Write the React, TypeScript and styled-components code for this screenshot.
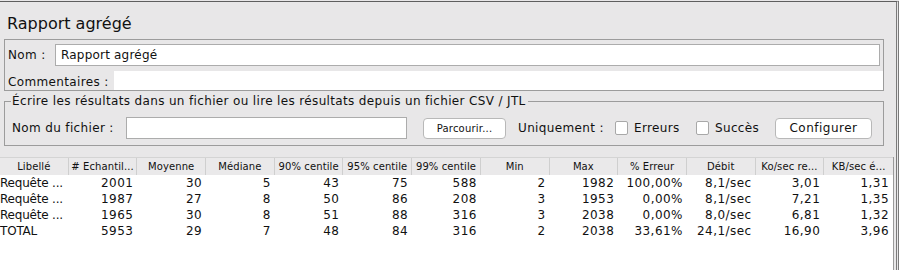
import React from 'react'
import styled, { createGlobalStyle } from 'styled-components'

const font = `"DejaVu Sans", "Liberation Sans", sans-serif`
const panel_bg = '#e8e7e8'
const panel_border = '#9c9c9c'
const field_border = '#acacac'

const GlobalStyle = createGlobalStyle`
  html, body {
    margin: 0;
    padding: 0;
    background: ${panel_bg};
  }
  body {
    font-family: ${font};
    color: #111;
  }
`

const Page = styled.div`
  width: 899px;
  height: 270px;
  box-sizing: border-box;
  margin-top: 1px;
  border-top: 1px solid #5f5f5f;
  border-right: 3px double #7a7a7a;
  display: flex;
  flex-direction: column;
  overflow: hidden;
`

const Title = styled.h1`
  margin: 12px 0 0 7px;
  font-size: 16px;
  font-weight: normal;
  line-height: 20px;
  height: 25px;
`

const Panel = styled.div`
  margin-left: 4px;
  width: 880px;
  box-sizing: border-box;
  border: 1px solid ${panel_border};
  display: flex;
  flex-direction: column;
`

const Row = styled.div<{ $height: number; $top?: number }>`
  display: flex;
  align-items: center;
  height: ${p => p.$height}px;
  margin-top: ${p => p.$top || 0}px;
  font-size: 12px;
  letter-spacing: 0.35px;
`

const Label = styled.span<{ $pad: number; $width?: number }>`
  padding-left: ${p => p.$pad}px;
  width: ${p => (p.$width ? `${p.$width}px` : 'auto')};
  flex-shrink: 0;
  white-space: nowrap;
`

const CommentLabel = styled(Label)`
  align-self: flex-end;
  padding-bottom: 1px;
`

const TextField = styled.div<{ $width?: number }>`
  box-sizing: border-box;
  height: 22px;
  width: ${p => (p.$width ? `${p.$width}px` : 'auto')};
  flex: ${p => (p.$width ? 'none' : 1)};
  margin-right: ${p => (p.$width ? 0 : 3)}px;
  background: #fff;
  border: 1px solid ${field_border};
  padding-left: 5px;
  display: flex;
  align-items: center;
  font-size: 12px;
  letter-spacing: 0.2px;
`

const CommentArea = styled.div`
  flex: 1;
  align-self: stretch;
  margin-top: 2px;
  background: #fff;
`

const Fieldset = styled.fieldset`
  margin: 3px 0 0 4px;
  width: 880px;
  box-sizing: border-box;
  border: 1px solid ${panel_border};
  padding: 0;
  height: 52px;
`

const Legend = styled.legend`
  margin-left: 6px;
  padding: 0 2px 0 1px;
  font-size: 12px;
  line-height: 14px;
  letter-spacing: 0.35px;
`

const Button = styled.div<{ $width: number; $small?: boolean }>`
  box-sizing: border-box;
  width: ${p => p.$width}px;
  height: 21px;
  background: #fff;
  border: 1px solid #b8b8b8;
  border-radius: 4px;
  display: flex;
  align-items: center;
  justify-content: center;
  font-size: ${p => (p.$small ? 10 : 12)}px;
  letter-spacing: ${p => (p.$small ? 0.2 : 0.5)}px;
  flex-shrink: 0;
`

const Checkbox = styled.span`
  box-sizing: border-box;
  width: 13px;
  height: 14px;
  background: #fff;
  border: 1px solid #a8a8a8;
  border-radius: 2px;
  margin-right: 6px;
  flex-shrink: 0;
`

const Gap = styled.span<{ $w: number }>`
  width: ${p => p.$w}px;
  flex-shrink: 0;
`

const Table = styled.div`
  margin-top: 11px;
  width: 893px;
  flex: 1;
  background: #fff;
  border-right: 1px solid #9a9a9a;
`

const Grid = styled.div<{ $header?: boolean }>`
  display: grid;
  grid-template-columns: repeat(13, 1fr);
  height: ${p => (p.$header ? 17 : 16)}px;
  background: ${p => (p.$header ? '#eae9ea' : '#fff')};
  border-top: ${p => (p.$header ? `1px solid #d4d4d4` : 'none')};
  font-size: ${p => (p.$header ? 10 : 12)}px;
  letter-spacing: ${p => (p.$header ? '0.1px' : '0.45px')};
`

const HeadCell = styled.div`
  display: flex;
  align-items: center;
  justify-content: center;
  border-right: 1px solid #cfcfcf;
  white-space: nowrap;
  overflow: hidden;
  &:last-child {
    border-right: none;
  }
`

const Cell = styled.div<{ $left?: boolean }>`
  display: flex;
  align-items: center;
  justify-content: ${p => (p.$left ? 'flex-start' : 'flex-end')};
  padding-right: ${p => (p.$left ? 0 : 4)}px;
  letter-spacing: ${p => (p.$left ? '-0.2px' : 'inherit')};
  white-space: nowrap;
  overflow: hidden;
`

const headers = [
  'Libellé', '# Echantil...', 'Moyenne', 'Médiane', '90% centile', '95% centile',
  '99% centile', 'Min', 'Max', '% Erreur', 'Débit', 'Ko/sec re...', 'KB/sec é...'
]

const rows = [
  ['Requête ...', '2001', '30', '5', '43', '75', '588', '2', '1982', '100,00%', '8,1/sec', '3,01', '1,31'],
  ['Requête ...', '1987', '27', '8', '50', '86', '208', '3', '1953', '0,00%', '8,1/sec', '7,21', '1,35'],
  ['Requête ...', '1965', '30', '8', '51', '88', '316', '3', '2038', '0,00%', '8,0/sec', '6,81', '1,32'],
  ['TOTAL', '5953', '29', '7', '48', '84', '316', '2', '2038', '33,61%', '24,1/sec', '16,90', '3,96']
]

const App = () => {
  return (
    <Page>
      <GlobalStyle />
      <Title>Rapport agrégé</Title>
      <Panel>
        <Row $height={29}>
          <Label $pad={3} $width={47}>Nom :</Label>
          <TextField>Rapport agrégé</TextField>
        </Row>
        <Row $height={21}>
          <CommentLabel $pad={3} $width={106}>Commentaires :</CommentLabel>
          <CommentArea />
        </Row>
      </Panel>
      <Fieldset>
        <Legend>Écrire les résultats dans un fichier ou lire les résultats depuis un fichier CSV / JTL</Legend>
        <Row $height={30} $top={5}>
          <Label $pad={7} $width={114}>Nom du fichier :</Label>
          <TextField $width={281}>{''}</TextField>
          <Gap $w={16} />
          <Button $width={83} $small>Parcourir...</Button>
          <Gap $w={12} />
          <Label $pad={0} $width={97}>Uniquement :</Label>
          <Checkbox />
          <Label $pad={0} $width={62}>Erreurs</Label>
          <Checkbox />
          <Label $pad={0} $width={60}>Succès</Label>
          <Button $width={97}>Configurer</Button>
        </Row>
      </Fieldset>
      <Table>
        <Grid $header>
          {headers.map(h => (
            <HeadCell key={h}>{h}</HeadCell>
          ))}
        </Grid>
        {rows.map((r, i) => (
          <Grid key={i}>
            {r.map((v, j) => (
              <Cell key={j} $left={j === 0}>{v}</Cell>
            ))}
          </Grid>
        ))}
      </Table>
    </Page>
  )
}

export default App
